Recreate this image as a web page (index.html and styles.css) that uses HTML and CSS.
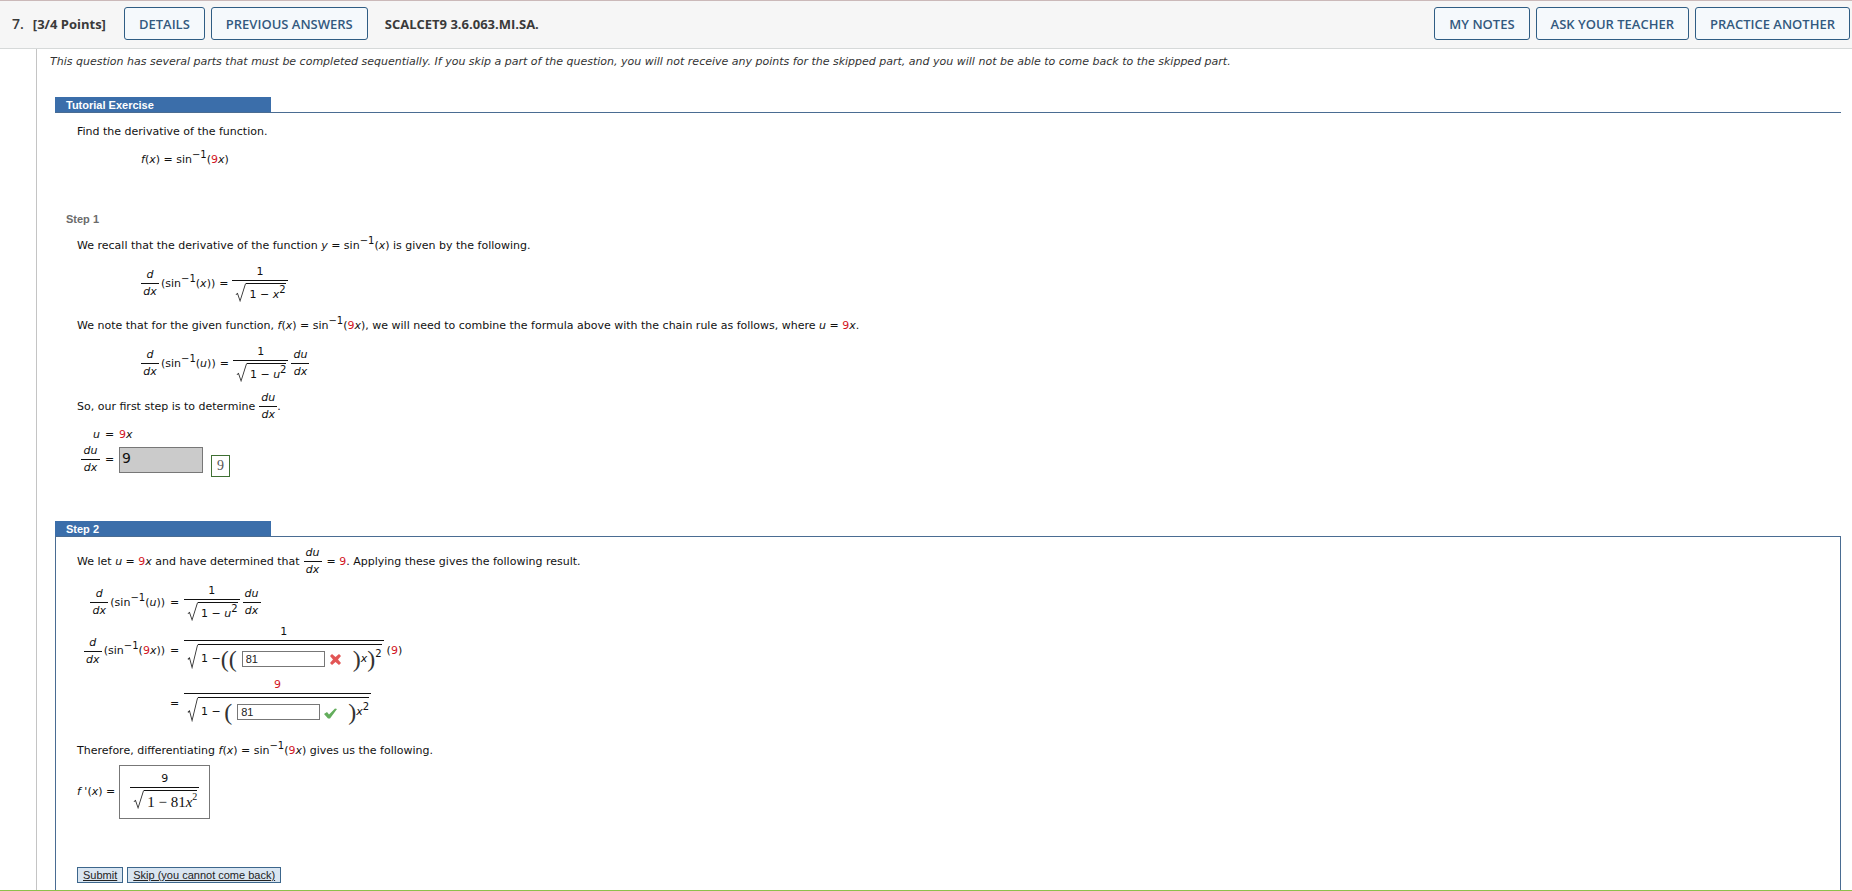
FILE: index.html
```html
<!DOCTYPE html>
<html lang="en">
<head>
<meta charset="utf-8">
<title>SCALCET9 3.6.063.MI.SA.</title>
<link rel="stylesheet" href="styles.css">
</head>
<body>
<div class="page">
<header class="topbar">
  <span class="number">7.</span>
  <span class="points">[3/4 Points]</span>
  <button class="action" type="button">DETAILS</button>
  <button class="action" type="button">PREVIOUS ANSWERS</button>
  <span class="code">SCALCET9 3.6.063.MI.SA.</span>
  <button class="action push" type="button">MY NOTES</button>
  <button class="action" type="button">ASK YOUR TEACHER</button>
  <button class="action" type="button">PRACTICE ANOTHER</button>
</header>
<main class="question">
  <p class="notice">This question has several parts that must be completed sequentially. If you skip a part of the question, you will not receive any points for the skipped part, and you will not be able to come back to the skipped part.</p>

  <section class="tutorial">
    <div class="rule"><h2 class="tab">Tutorial Exercise</h2></div>
    <div class="body">
      <p class="line">Find the derivative of the function.</p>
      <p class="line indent"><i>f</i>(<i>x</i>) = sin<sup>−1</sup>(<b>9</b><i>x</i>)</p>
    </div>
  </section>

  <section class="step-one">
    <h2 class="plain">Step 1</h2>
    <div class="body">
      <p class="line">We recall that the derivative of the function <i>y</i> = sin<sup>−1</sup>(<i>x</i>) is given by the following.</p>
      <div class="math indent">
        <span class="frac"><i>d</i><i class="den">dx</i></span>
        <span class="term">(sin<sup>−1</sup>(<i>x</i>))</span><span class="eq">=</span>
        <span class="frac wide"><span>1</span><span class="den root"><svg class="surd" viewBox="0 0 13 18" preserveAspectRatio="none"><path d="M1 11 3 10 6 17 12.500 .5"/></svg><span class="radicand">1 − <i>x</i><sup>2</sup></span></span></span>
      </div>
      <p class="line">We note that for the given function, <i>f</i>(<i>x</i>) = sin<sup>−1</sup>(<b>9</b><i>x</i>), we will need to combine the formula above with the chain rule as follows, where <i>u</i> = <b>9</b><i>x</i>.</p>
      <div class="math indent">
        <span class="frac"><i>d</i><i class="den">dx</i></span>
        <span class="term">(sin<sup>−1</sup>(<i>u</i>))</span><span class="eq">=</span>
        <span class="frac wide"><span>1</span><span class="den root"><svg class="surd" viewBox="0 0 13 18" preserveAspectRatio="none"><path d="M1 11 3 10 6 17 12.500 .5"/></svg><span class="radicand">1 − <i>u</i><sup>2</sup></span></span></span>
        <span class="frac"><i>du</i><i class="den">dx</i></span>
      </div>
      <div class="math sentence"><span>So, our first step is to determine</span><span class="frac"><i>du</i><i class="den">dx</i></span><span>.</span></div>
      <div class="pair">
        <i class="lhs">u</i><span>=</span><span><b>9</b><i>x</i></span>
        <label class="frac" for="dudx"><i>du</i><i class="den">dx</i></label><span>=</span>
        <span class="reply"><input class="given" id="dudx" type="text" value="9" readonly><span class="key">9</span></span>
      </div>
    </div>
  </section>

  <section class="step-two">
    <div class="rule"><h2 class="tab">Step 2</h2></div>
    <div class="panel">
      <div class="math intro"><span>We let <i>u</i> = <b>9</b><i>x</i> and have determined that</span><span class="frac"><i>du</i><i class="den">dx</i></span><span class="after">= <b>9</b>. Applying these gives the following result.</span></div>
      <div class="align">
        <div class="math lhs"><span class="frac"><i>d</i><i class="den">dx</i></span><span class="term">(sin<sup>−1</sup>(<i>u</i>))</span></div>
        <span>=</span>
        <div class="math">
          <span class="frac wide"><span>1</span><span class="den root"><svg class="surd" viewBox="0 0 13 18" preserveAspectRatio="none"><path d="M1 11 3 10 6 17 12.500 .5"/></svg><span class="radicand">1 − <i>u</i><sup>2</sup></span></span></span>
          <span class="frac"><i>du</i><i class="den">dx</i></span>
        </div>

        <div class="math lhs"><span class="frac"><i>d</i><i class="den">dx</i></span><span class="term">(sin<sup>−1</sup>(<b>9</b><i>x</i>))</span></div>
        <span>=</span>
        <div class="math">
          <span class="frac wide tall"><span>1</span><span class="den root"><svg class="surd" viewBox="0 0 13 18" preserveAspectRatio="none"><path d="M1 11 3 10 6 17 12.500 .5"/></svg><span class="radicand">1 −<span class="paren">(</span><span class="paren">(</span><input class="blank" type="text" value="81" aria-label="First coefficient"><svg class="mark" viewBox="0 0 13 13"><path class="bad" d="M1 3 3 1 6.500 4 10 1 12 3 9 6.500 12 10 10 12 6.500 9 3 12 1 10 4 6.500Z"/></svg><span class="paren">)</span><i>x</i><span class="paren">)</span><sup>2</sup></span></span></span>
          <span class="factor">(<b>9</b>)</span>
        </div>

        <span></span>
        <span>=</span>
        <div class="math">
          <span class="frac wide tall"><b>9</b><span class="den root"><svg class="surd" viewBox="0 0 13 18" preserveAspectRatio="none"><path d="M1 11 3 10 6 17 12.500 .5"/></svg><span class="radicand">1 − <span class="paren">(</span><input class="blank" type="text" value="81" aria-label="Second coefficient"><svg class="mark" viewBox="0 0 13 13"><path class="good" d="M0 8 3 6 5 8.500 11 2.500 13 3 6 12.500 4 12.500Z"/></svg><span class="paren">)</span><i>x</i><sup>2</sup></span></span></span>
        </div>
      </div>
      <p class="line">Therefore, differentiating <i>f</i>(<i>x</i>) = sin<sup>−1</sup>(<b>9</b><i>x</i>) gives us the following.</p>
      <div class="math final">
        <span><i>f</i> '(<i>x</i>) =</span>
        <span class="answer"><span class="frac wide"><span>9</span><span class="den root"><svg class="surd" viewBox="0 0 13 18" preserveAspectRatio="none"><path d="M1 11 3 10 6 17 12.500 .5"/></svg><span class="radicand serif">1 − 81<i>x</i><sup>2</sup></span></span></span></span>
      </div>
      <div class="buttons">
        <button class="small" type="submit">Submit</button>
        <button class="small" type="button">Skip (you cannot come back)</button>
      </div>
    </div>
  </section>
</main>
</div>
</body>
</html>
```

FILE: styles.css
```css
* { box-sizing: border-box; }
body { margin: 0; background: #fff; }
p, h2 { margin: 0; }
b { font-weight: 400; color: #d2141e; }

.page {
  display: flex;
  flex-direction: column;
  height: 100vh;
  overflow: hidden;
  border-top: 1px solid #cbb9b9;
  border-bottom: 1px solid #8dc04a;
  font: 11px/16px "DejaVu Sans", Verdana, sans-serif;
  color: #111;
}

.topbar {
  display: flex;
  align-items: center;
  flex: none;
  height: 48px;
  padding: 0 2px 2px 12px;
  background: #f6f6f6;
  border-bottom: 1px solid #d6d9d9;
  font: 700 13px/18px "Open Sans", sans-serif;
  color: #3a3a3a;
}
.number { font-size: 14px; font-weight: 600; }
.points { margin: 0 18px 0 9px; }
.code { margin-left: 11px; }
.action {
  height: 33px;
  margin-right: 6px;
  padding: 0 14px;
  border: 1px solid #2f5d84;
  border-radius: 3px;
  background: #f5f9fc;
  font: 600 13px/18px "Open Sans", sans-serif;
  color: #33597f;
}
.action:last-child { margin-right: 0; }
.push { margin-left: auto; }

.question {
  display: flex;
  flex-direction: column;
  flex: 1;
  min-height: 0;
  margin-left: 36px;
  padding-right: 11px;
  border-left: 1px solid #c4c4c4;
}
.notice {
  padding: 5px 0 27px 13px;
  font-style: italic;
  color: #333;
}
section { margin-left: 18px; }
.rule { border-bottom: 1px solid #4a6c92; }
.tab {
  width: 216px;
  height: 15px;
  padding-left: 11px;
  background: #3b6eaa;
  font: 700 11px/16px "Liberation Sans", Arial, sans-serif;
  color: #fff;
}
.plain {
  padding-left: 11px;
  font: 700 11px/16px "Liberation Sans", Arial, sans-serif;
  color: #6b6b6b;
}
.body { padding-left: 22px; }
.tutorial .body { padding-top: 11px; }
.tutorial .indent { margin-top: 12px; }
.indent { margin-left: 64px; }
.step-one { margin-top: 43px; }
.step-one .line { margin-top: 11px; }
.step-one .math { margin-top: 10px; }
.step-one .math + .line { margin-top: 15px; }
.step-one .sentence { margin-top: 7px; }

sup {
  position: relative;
  top: -5px;
  font-size: 10px;
  line-height: 0;
  vertical-align: baseline;
}

.math { display: flex; align-items: center; }
.frac {
  display: inline-flex;
  flex-direction: column;
  align-items: center;
  min-width: 18px;
  text-align: center;
}
.den {
  align-self: stretch;
  border-top: 1px solid #111;
}
.term { margin-left: 2px; }
.eq { margin: 0 4px; }
.wide { margin-right: 3px; }
.root {
  display: flex;
  align-items: stretch;
  padding: 2px 2px 0 3px;
}
.surd { width: 11px; height: 19px; flex: none; }
.surd path { fill: none; stroke: #333; stroke-width: 1; }
.radicand {
  display: flex;
  align-items: center;
  height: 20px;
  padding: 3px 0 0 3px;
  border-top: 1px solid #111;
  white-space: pre;
}
.tall { margin-top: -3px; margin-bottom: 3px; }
.tall .root { padding-top: 3px; }
.tall .surd { height: 25px; }
.tall .radicand { height: 28px; padding-top: 0; }
.sentence .frac, .intro .frac { margin-left: 4px; }

.pair {
  display: grid;
  grid-template-columns: 19px 9px auto;
  justify-content: start;
  align-items: center;
  column-gap: 5px;
  margin: 4px 0 0 4px;
}
.pair .lhs { text-align: right; }
.reply { display: flex; align-items: flex-end; }
.given {
  width: 84px;
  height: 26px;
  padding: 0 2px 4px;
  border: 1px solid #777;
  background: #cbcbcb;
  font: 14px/18px "DejaVu Sans", Verdana, sans-serif;
  color: #111;
}
.key {
  margin: 8px 0 -4px 8px;
  padding: 0 5px;
  border: 1px solid #3f7033;
  font: 14px/20px "Liberation Serif", serif;
  color: #555;
}

.step-two {
  display: flex;
  flex-direction: column;
  flex: 1;
  margin-top: 45px;
  min-height: 0;
}
.panel {
  flex: 1;
  min-height: 0;
  padding: 8px 0 0 21px;
  border: solid #4a6c92;
  border-width: 0 1px;
}
.after { margin-left: 5px; }
.align {
  display: grid;
  grid-template-columns: 84px 9px auto;
  justify-content: start;
  align-items: center;
  column-gap: 5px;
  row-gap: 5px;
  margin: 5px 0 15px 4px;
}
.align .lhs { justify-content: flex-end; }
.paren { font: 24px/24px "Liberation Serif", serif; color: #333; }
.blank {
  width: 83px;
  height: 16px;
  margin: 0 4px 0 5px;
  padding: 0 3px;
  border: 1px solid #777;
  font: 11px/14px "Liberation Sans", Arial, sans-serif;
  color: #222;
}
.mark { width: 13px; height: 13px; margin: 2px 11px 0 0; }
.bad { fill: #e25555; }
.good { fill: #63ad5c; }

.final { margin-top: 6px; }
.answer {
  margin-left: 4px;
  padding: 5px 7px 8px 10px;
  border: 1px solid #777;
}
.serif { font: 15px/18px "Liberation Serif", serif; }
.buttons { display: flex; gap: 4px; margin-top: 48px; }
.small {
  height: 16px;
  padding: 0 5px;
  border: 1px solid #3c668c;
  background: #d9e5f1;
  font: 11px/14px "Liberation Sans", Arial, sans-serif;
  text-decoration: underline;
  color: #222;
}
```
